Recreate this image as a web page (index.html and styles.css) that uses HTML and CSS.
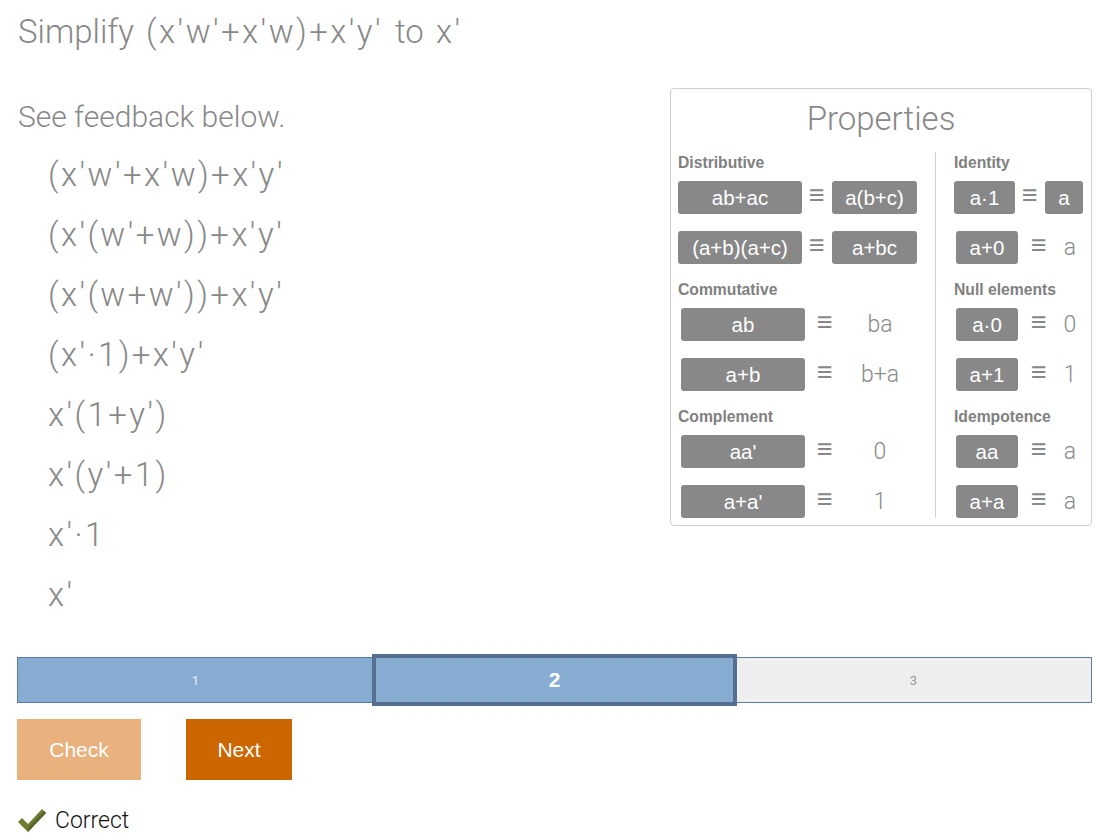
FILE: index.html
```html
<!DOCTYPE html>
<html>
<head>
<meta charset="utf-8">
<link rel="stylesheet" href="styles.css">
</head>
<body>
<div class="page">
  <h1 class="title">Simplify <span class="math gap">(x'w'+x'w)+x'y'</span> to <span class="math gap">x'</span></h1>
  <div class="main">
    <div class="left">
      <p class="feedback">See feedback below.</p>
      <div class="steps">
        <div class="step math">(x'w'+x'w)+x'y'</div>
        <div class="step math">(x'(w'+w))+x'y'</div>
        <div class="step math">(x'(w+w'))+x'y'</div>
        <div class="step math">(x'·1)+x'y'</div>
        <div class="step math">x'(1+y')</div>
        <div class="step math">x'(y'+1)</div>
        <div class="step math">x'·1</div>
        <div class="step math">x'</div>
      </div>
    </div>
    <div class="panel">
      <div class="panel-title">Properties</div>
      <div class="cols">
        <div class="col col-left">
          <div class="sec">
            <div class="sec-h">Distributive</div>
            <div class="row r-dist"><span class="chip">ab+ac</span><span class="eq">≡</span><span class="chip">a(b+c)</span></div>
            <div class="row r-dist"><span class="chip">(a+b)(a+c)</span><span class="eq">≡</span><span class="chip">a+bc</span></div>
          </div>
          <div class="sec">
            <div class="sec-h">Commutative</div>
            <div class="row r-comm"><span class="chip">ab</span><span class="eq">≡</span><span class="val">ba</span></div>
            <div class="row r-comm"><span class="chip">a+b</span><span class="eq">≡</span><span class="val">b+a</span></div>
          </div>
          <div class="sec">
            <div class="sec-h">Complement</div>
            <div class="row r-comm"><span class="chip">aa'</span><span class="eq">≡</span><span class="val">0</span></div>
            <div class="row r-comm"><span class="chip">a+a'</span><span class="eq">≡</span><span class="val">1</span></div>
          </div>
        </div>
        <div class="divider"></div>
        <div class="col col-right">
          <div class="sec">
            <div class="sec-h">Identity</div>
            <div class="row r-id1"><span class="chip">a·1</span><span class="eq">≡</span><span class="chip">a</span></div>
            <div class="row r-id"><span class="chip">a+0</span><span class="eq">≡</span><span class="val">a</span></div>
          </div>
          <div class="sec">
            <div class="sec-h">Null elements</div>
            <div class="row r-id"><span class="chip">a·0</span><span class="eq">≡</span><span class="val">0</span></div>
            <div class="row r-id"><span class="chip">a+1</span><span class="eq">≡</span><span class="val">1</span></div>
          </div>
          <div class="sec">
            <div class="sec-h">Idempotence</div>
            <div class="row r-id"><span class="chip">aa</span><span class="eq">≡</span><span class="val">a</span></div>
            <div class="row r-id"><span class="chip">a+a</span><span class="eq">≡</span><span class="val">a</span></div>
          </div>
        </div>
      </div>
    </div>
  </div>
  <div class="progress">
    <div class="seg done">1</div>
    <div class="seg current">2</div>
    <div class="seg todo">3</div>
  </div>
  <div class="buttons">
    <button class="btn check">Check</button>
    <button class="btn next">Next</button>
  </div>
  <div class="result">
    <svg class="tick" width="30" height="26" viewBox="0 0 30 26">
      <path d="M1 14 L5 10 L11 16 L25 1 L29 5 L11 24 Z" fill="#6e7f33"/>
      <path d="M11 24 L29 5 L27 3 L11 20 Z" fill="#56652a"/>
    </svg>
    <span class="result-text">Correct</span>
  </div>
</div>
</body>
</html>
```
FILE: styles.css
```css
html, body {
  margin: 0;
  padding: 0;
  background: #fff;
}
.page {
  padding: 0 3px 0 17px;
  font-family: Roboto, "Liberation Sans", sans-serif;
  color: #888;
}
.math {
  letter-spacing: 2.4px;
}
.title {
  margin: 0;
  padding-top: 12px;
  padding-left: 1px;
  font-weight: 300;
  font-size: 33px;
  line-height: 40px;
  height: 40px;
}
.title .gap { margin: 0 4px 0 4px; }
.main {
  display: flex;
  justify-content: space-between;
  align-items: flex-start;
  margin-top: 36px;
}
.left {
  padding-left: 1px;
}
.feedback {
  margin: 0;
  font-weight: 300;
  font-size: 30px;
  line-height: 40px;
  margin-top: 9px;
}
.steps {
  padding-left: 30px;
  margin-top: 8px;
}
.step {
  font-weight: 300;
  font-size: 33px;
  line-height: 60px;
  height: 60px;
}
.panel {
  width: 420px;
  height: 436px;
  border: 1px solid #cfcfcf;
  border-radius: 4px;
  box-sizing: content-box;
}
.panel-title {
  text-align: center;
  font-weight: 300;
  font-size: 33px;
  line-height: 40px;
  margin-top: 10px;
  color: #888;
}
.cols {
  display: flex;
  margin-top: 15px;
  padding-left: 7px;
}
.col-left { width: 257px; }
.divider {
  width: 1px;
  background: #d0d0d0;
  margin-top: -2px;
  height: 366px;
}
.col-right { padding-left: 18px; }
.sec-h {
  font-family: "Liberation Sans", Arial, sans-serif;
  font-weight: bold;
  font-size: 15.7px;
  line-height: 18px;
  color: #808080;
  margin-bottom: 9px;
}
.sec + .sec { margin-top: 17px; }
.row {
  display: grid;
  align-items: center;
  height: 33px;
}
.row + .row { margin-top: 17px; }
.r-dist { grid-template-columns: 124px 30px 85px; }
.r-comm { grid-template-columns: 124px 40px 70px; padding-left: 3px; }
.r-id1 { grid-template-columns: 61px 30px 38px; }
.r-id { grid-template-columns: 62px 42px 20px; padding-left: 2px; }
.chip {
  display: flex;
  align-items: center;
  justify-content: center;
  height: 33px;
  background: #888;
  border-radius: 3px;
  color: #fff;
  font-family: "Liberation Sans", Arial, sans-serif;
  font-size: 20.5px;
}
.eq {
  text-align: center;
  font-size: 27px;
  line-height: 24px;
  color: #888;
  font-family: "Liberation Sans", Arial, sans-serif;
  margin-top: -5px;
}
.val {
  text-align: center;
  font-weight: 300;
  font-size: 23px;
  color: #8a8a8a;
}
.progress {
  display: flex;
  margin-top: 32px;
  height: 46px;
  width: 1075px;
}
.seg {
  flex: 1;
  display: flex;
  align-items: center;
  justify-content: center;
  box-sizing: border-box;
  border: 1px solid #5b7ba2;
  font-size: 13px;
}
.seg.done {
  background: #87acd2;
  color: #e6edf7;
  border-right: none;
}
.seg.current {
  background: #87acd2;
  border: 4px solid #566e8f;
  margin: -3px -1px;
  height: 52px;
  flex: 0 0 365px;
  color: #fff;
  font-family: "Liberation Sans", Arial, sans-serif;
  font-weight: bold;
  font-size: 21px;
  z-index: 1;
}
.seg.todo {
  background: #eeeeee;
  color: #999;
  border-left: none;
}
.buttons {
  display: flex;
  gap: 45px;
  margin-top: 16px;
}
.btn {
  border: none;
  height: 61px;
  color: #fff;
  font-family: "Liberation Sans", Arial, sans-serif;
  font-size: 21px;
  padding: 0;
  cursor: pointer;
}
.btn.check { width: 124px; background: #e8b17e; }
.btn.next { width: 106px; background: #cc6600; }
.result {
  display: flex;
  align-items: center;
  margin-top: 27px;
  gap: 8px;
}
.tick { display: block; }
.result-text {
  font-weight: 300;
  font-size: 23px;
  color: #111;
}
```
